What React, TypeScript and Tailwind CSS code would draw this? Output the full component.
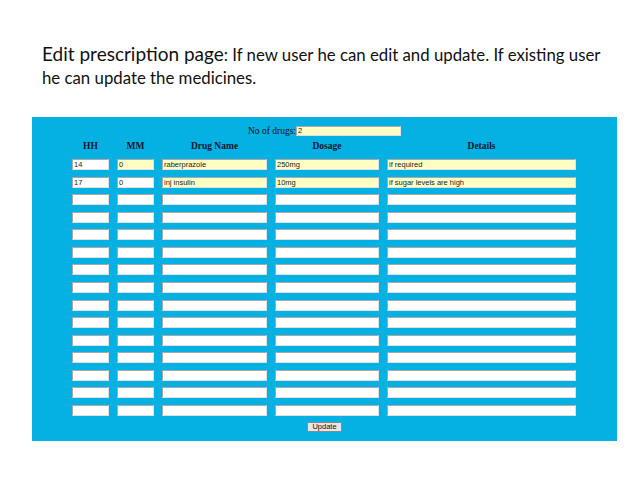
import React from "react";

type Cell = { v: string; y?: boolean };

const rows: Cell[][] = [
  [{ v: "14" }, { v: "0", y: true }, { v: "raberprazole", y: true }, { v: "250mg", y: true }, { v: "if required", y: true }],
  [{ v: "17" }, { v: "0" }, { v: "inj insulin", y: true }, { v: "10mg", y: true }, { v: "if sugar levels are high", y: true }],
];
while (rows.length < 15) rows.push([{ v: "" }, { v: "" }, { v: "" }, { v: "" }, { v: "" }]);

const heads = ["HH", "MM", "Drug Name", "Dosage", "Details"];

function Field({ c }: { c: Cell }) {
  return (
    <div
      className={`h-[11px] border border-t-[#a9a9a9] border-l-[#a9a9a9] border-r-[#e0e0e0] border-b-[#e0e0e0] px-[1px] text-[7.5px] leading-[9px] text-[#222] whitespace-nowrap overflow-hidden ${
        c.y ? "bg-[#ffffc4]" : "bg-white"
      }`}
      style={{ fontFamily: '"Liberation Sans", Arial, sans-serif' }}
    >
      {c.v}
    </div>
  );
}

export default function App() {
  return (
    <div className="w-[638px] h-[478px] bg-white overflow-hidden">
      <div
        className="h-[117px] pl-[42px] pt-[42px] text-[#111] leading-[23px]"
        style={{ fontFamily: 'Lato, "Open Sans", sans-serif' }}
      >
        <div className="w-[570px]">
          <span className="text-[19px]">Edit prescription page</span>
          <span className="text-[16.8px]">: If new user he can edit and update. If existing user he can update the medicines.</span>
        </div>
      </div>

      <div className="ml-[32px] w-[585px] h-[324px] bg-[#05b0e2] pt-[9px] flex flex-col items-center">
        <div
          className="flex items-center h-[10px] text-[9.5px] text-[#111]"
          style={{ fontFamily: '"Liberation Serif", "Times New Roman", serif' }}
        >
          <span>No of drugs:</span>
          <div
            className="w-[105px] h-[10px] bg-[#ffffc4] border border-t-[#a9a9a9] border-l-[#a9a9a9] border-r-[#e0e0e0] border-b-[#e0e0e0] text-[7.5px] leading-[8px] px-[1px]"
            style={{ fontFamily: '"Liberation Sans", Arial, sans-serif' }}
          >
            2
          </div>
        </div>

        <div className="self-start ml-[40px] mt-[5px] grid grid-cols-[37px_37px_105px_104px_189px] gap-x-[8px]">
          {heads.map((h) => (
            <div
              key={h}
              className="text-center font-bold text-[9.5px] h-[18px] leading-[10px] text-[#151530]"
              style={{ fontFamily: '"Liberation Serif", "Times New Roman", serif' }}
            >
              {h}
            </div>
          ))}
        </div>

        <div className="self-start ml-[40px] flex flex-col gap-[6.57px]">
          {rows.map((r, i) => (
            <div key={i} className="grid grid-cols-[37px_37px_105px_104px_189px] gap-x-[8px]">
              {r.map((c, j) => (
                <Field key={j} c={c} />
              ))}
            </div>
          ))}
        </div>

        <button
          className="mt-[6px] h-[10px] px-[4px] border border-[#8a8a8a] bg-[#e6e6e6] text-[7.5px] leading-[8px] text-[#111]"
          style={{ fontFamily: '"Liberation Sans", Arial, sans-serif' }}
        >
          Update
        </button>
      </div>
    </div>
  );
}
